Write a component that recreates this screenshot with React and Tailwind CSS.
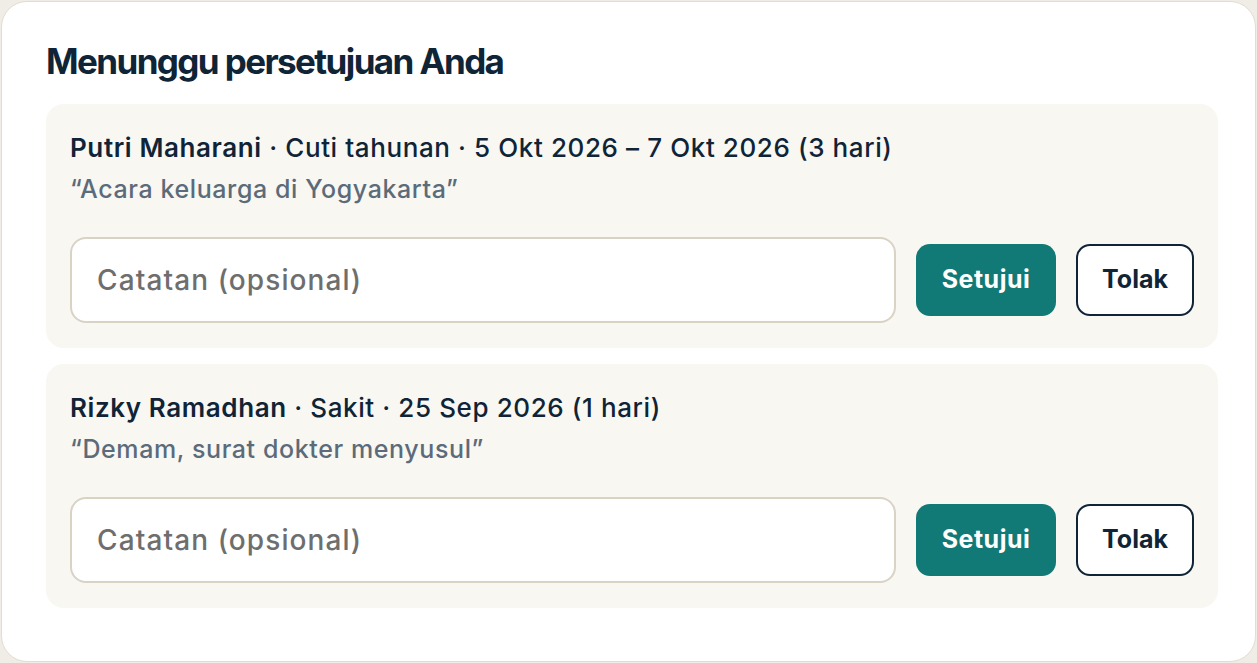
const requests = [
  {
    name: "Putri Maharani",
    detail: "Cuti tahunan · 5 Okt 2026 – 7 Okt 2026 (3 hari)",
    note: "“Acara keluarga di Yogyakarta”",
  },
  {
    name: "Rizky Ramadhan",
    detail: "Sakit · 25 Sep 2026 (1 hari)",
    note: "“Demam, surat dokter menyusul”",
  },
];

function RequestRow({ req }) {
  return (
    <div className="rounded-[18px] bg-[#f8f7f2] px-6 pt-[27px] pb-[25px]">
      <p className="text-[26px] leading-[34px] font-medium tracking-[0.6px] text-[#0f2437]">
        <span className="font-semibold">{req.name}</span> · {req.detail}
      </p>
      <p className="mt-[6px] text-[25px] leading-[36px] font-medium tracking-[0.6px] text-[#5c6b7a]">{req.note}</p>
      <div className="mt-[30px] flex items-center gap-5">
        <input
          placeholder="Catatan (opsional)"
          className="h-[86px] w-[826px] rounded-[16px] border-2 border-[#d9d3c5] bg-white px-[25px] text-[28px] font-medium tracking-[1.1px] text-[#0f2437] outline-none placeholder:text-[#6e6e6e]"
        />
        <button className="h-[72px] w-[140px] rounded-[14px] bg-[#127a76] text-[25px] font-bold tracking-[0.5px] text-white">
          Setujui
        </button>
        <button className="h-[72px] w-[118px] rounded-[14px] border-2 border-[#0f2437] bg-white text-[25px] font-bold text-[#0f2437]">
          Tolak
        </button>
      </div>
    </div>
  );
}

export default function App() {
  return (
    <div className="h-[663px] w-full overflow-hidden bg-[#efede6] p-px font-['Inter',sans-serif]">
      <div className="h-[661px] w-full rounded-[26px] border border-[#e2ddd0] bg-white pt-[37px] pl-[44px] pr-[37px]">
        <h2 className="text-[35px] leading-[44px] font-bold tracking-[-1.6px] text-[#0f2437]">Menunggu persetujuan Anda</h2>
        <div className="mt-[21px] flex flex-col gap-4">
          {requests.map((r) => (
            <RequestRow key={r.name} req={r} />
          ))}
        </div>
      </div>
    </div>
  );
}
